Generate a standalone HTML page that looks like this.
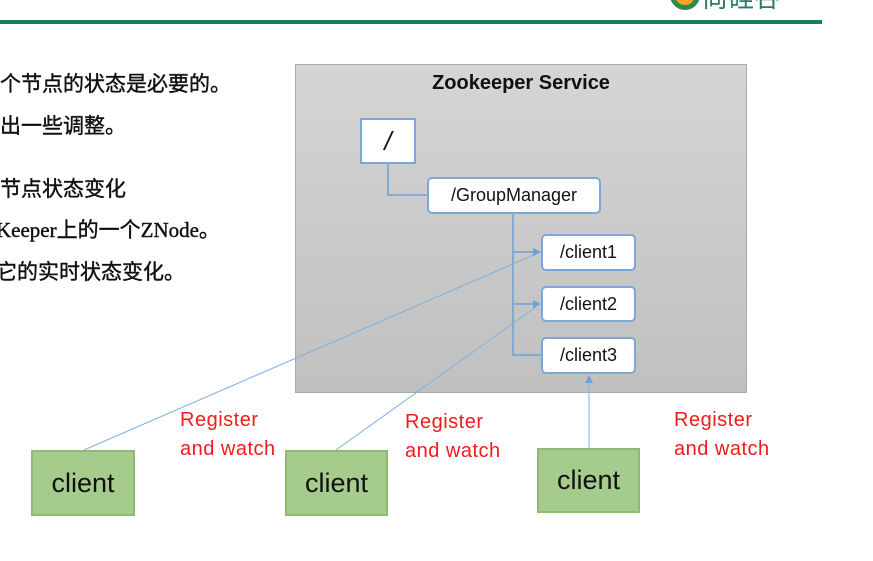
<!DOCTYPE html>
<html><head><meta charset="utf-8"><style>
body{margin:0;width:873px;height:561px;background:#fff;position:relative;overflow:hidden;font-family:"Liberation Sans","Noto Sans CJK SC",sans-serif}
.t{position:absolute;left:0;font-size:21px;color:#111;white-space:nowrap;font-family:"Liberation Serif","Noto Sans CJK SC",sans-serif;-webkit-text-stroke:0.4px #111}
.n{position:absolute;background:#fff;border:2px solid #7ba7d9;border-radius:5px;box-sizing:border-box;font-size:18px;color:#111;display:flex;align-items:center;justify-content:center}
.c{position:absolute;background:#a6cc8d;border:2px solid #8dbb73;box-sizing:border-box;font-size:27px;color:#111;display:flex;align-items:center;justify-content:center}
.r{position:absolute;color:#f31a1a;font-size:20px;line-height:29px;letter-spacing:0.5px}
</style></head><body>
<div style="position:absolute;left:0;top:20px;width:822px;height:4px;background:#1c7a62"></div>
<div style="position:absolute;left:670px;top:-20px;width:20px;height:20px;border:5px solid #2b8a4c;border-radius:50%;background:#f5a623"></div>
<div style="position:absolute;left:702px;top:-22px;font-size:26px;color:#2b7a6a">尚硅谷</div>
<div class="t" style="top:68px;left:0">个节点的状态是必要的。</div>
<div class="t" style="top:110px">出一些调整。</div>
<div class="t" style="top:173px">节点状态变化</div>
<div class="t" style="top:214px;left:-4px">Keeper上的一个ZNode。</div>
<div class="t" style="top:256px;left:-4px">它的实时状态变化。</div>
<div style="position:absolute;left:295px;top:64px;width:452px;height:329px;box-sizing:border-box;border:1px solid #aaa;background:linear-gradient(#d5d5d5,#c0c0c0)"></div>
<div style="position:absolute;left:295px;top:72px;width:452px;text-align:center;font-weight:bold;font-size:20px;color:#111">Zookeeper Service</div>
<svg style="position:absolute;left:0;top:0" width="873" height="561">
<g stroke="#6fa0d6" stroke-width="1.5" fill="none">
<polyline points="388,164 388,195 427,195"/>
<polyline points="513,214 513,355 541,355"/>
<line x1="513" y1="252" x2="535" y2="252"/>
<line x1="513" y1="304" x2="535" y2="304"/>
</g>
<g stroke="#7fb0e0" stroke-width="1" fill="none">
<line x1="84" y1="450" x2="536" y2="254"/>
<line x1="336" y1="450" x2="536" y2="307"/>
<line x1="589" y1="448" x2="589" y2="380"/>
</g>
<g fill="#6fa0d6">
<polygon points="541,252 533,248 533,256"/>
<polygon points="541,304 533,300 533,308"/>
<polygon points="589,375 585,383 593,383"/>
</g>
</svg>
<div class="n" style="left:360px;top:118px;width:56px;height:46px;border-radius:0;font-size:26px;font-style:italic">/</div>
<div class="n" style="left:427px;top:177px;width:174px;height:37px">/GroupManager</div>
<div class="n" style="left:541px;top:234px;width:95px;height:37px">/client1</div>
<div class="n" style="left:541px;top:286px;width:95px;height:36px">/client2</div>
<div class="n" style="left:541px;top:337px;width:95px;height:37px">/client3</div>
<div class="c" style="left:31px;top:450px;width:104px;height:66px">client</div>
<div class="c" style="left:285px;top:450px;width:103px;height:66px">client</div>
<div class="c" style="left:537px;top:448px;width:103px;height:65px">client</div>
<div class="r" style="left:180px;top:406px">Register<br>and watch</div>
<div class="r" style="left:405px;top:408px">Register<br>and watch</div>
<div class="r" style="left:674px;top:406px">Register<br>and watch</div>
</body></html>
